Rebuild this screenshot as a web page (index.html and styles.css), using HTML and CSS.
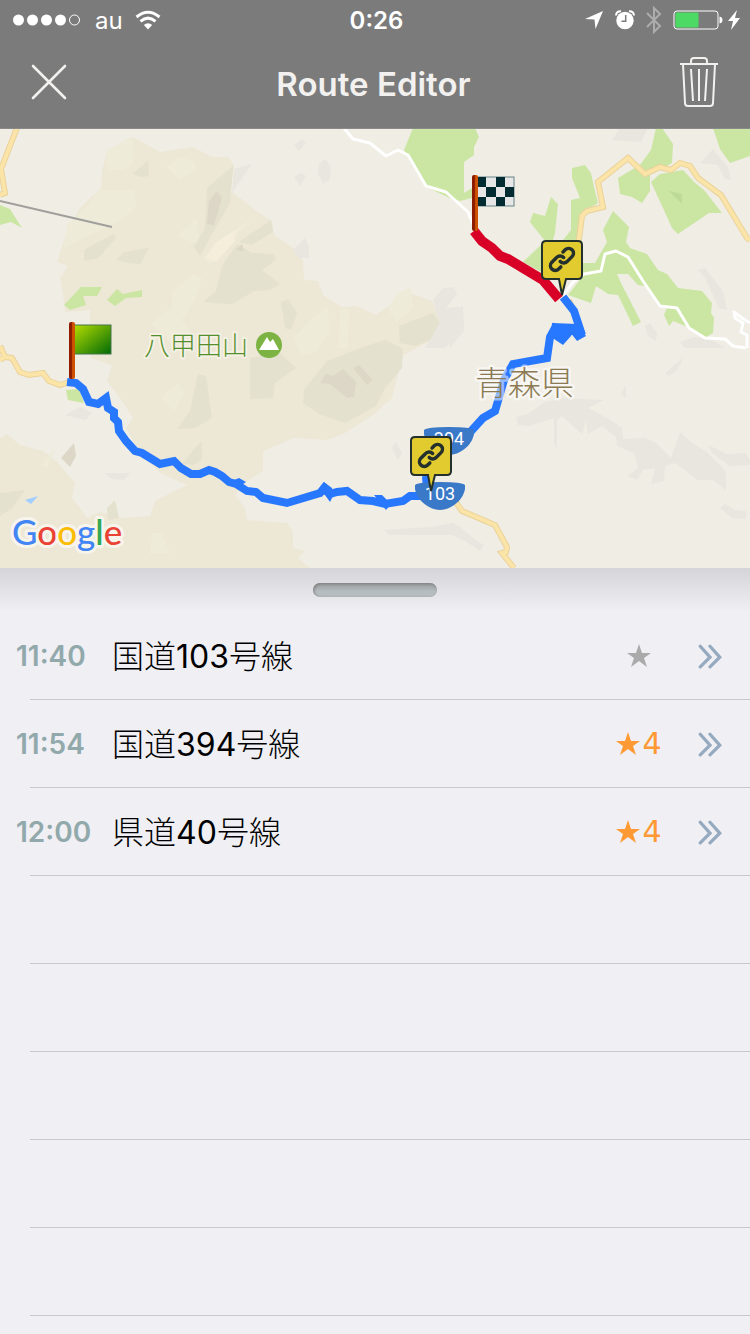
FILE: index.html
```html
<!DOCTYPE html>
<html lang="ja">
<head>
    <meta charset="UTF-8">
    <meta name="viewport" content="width=device-width, initial-scale=1.0">
    <title>Route Editor</title>
    <link rel="stylesheet" href="styles.css">
</head>
<body>
    <header class="header">
        <!-- Status bar -->
        <div class="status-bar">
            <div class="status-left">
                <svg class="signal" width="68" height="12" viewBox="0 0 68 12" fill="#fff">
                    <circle cx="5.500" cy="6" r="5.500"/><circle cx="19.500" cy="6" r="5.500"/><circle cx="33.500" cy="6" r="5.500"/><circle cx="47.500" cy="6" r="5.500"/>
                    <circle cx="61.500" cy="6" r="5" fill="none" stroke="#fff"/>
                </svg>
                <span class="carrier">au</span>
                <svg width="26" height="20" viewBox="0 0 26 20" fill="none" stroke="#fff" stroke-width="3">
                    <path d="M1.500 7Q13-2.500 24.500 7"/>
                    <path d="M5.500 11.300Q13 5 20.500 11.300"/>
                    <path d="M13 19.500L8.800 15Q13 11.500 17.200 15Z" fill="#fff" stroke="none"/>
                </svg>
            </div>
            <span class="clock">0:26</span>
            <div class="status-right">
                <svg width="20" height="20" viewBox="0 0 20 20" fill="#fff"><path d="M1 9L19 1L11.500 19L10.500 9.500Z"/></svg>
                <svg width="20" height="20" viewBox="0 0 20 20">
                    <circle cx="10" cy="10.500" r="8.700" fill="#fff"/>
                    <path d="M1 5.500Q1.500 1 6 1.300M19 5.500Q18.500 1 14 1.300" fill="none" stroke="#fff" stroke-width="2"/>
                    <path d="M10.700 5V11.300H6.500" fill="none" stroke="#7b7b7b" stroke-width="1.500"/>
                </svg>
                <svg width="16" height="28" viewBox="0 0 16 28" fill="none" stroke="#adadad" stroke-width="2"><path d="M1 7L14 20L8 26V2L14 8L1 21"/></svg>
                <svg class="battery" width="50" height="20" viewBox="0 0 50 20">
                    <rect x="1" y="1" width="44" height="18" rx="3" fill="none" stroke="#fff"/>
                    <rect x="2.500" y="2.500" width="23" height="15" rx="1" fill="#4cd964"/>
                    <path d="M46.500 6.500Q49.500 7 49.500 10Q49.500 13 46.500 13.500Z" fill="#fff"/>
                </svg>
                <svg width="12" height="20" viewBox="0 0 12 20" fill="#fff"><path d="M9 0L0 11H5L3 20L12 8H7Z"/></svg>
            </div>
        </div>
        <!-- Navigation bar -->
        <div class="nav-bar">
            <button class="icon-button" type="button" aria-label="Close">
                <svg width="36" height="36" viewBox="0 0 36 36" fill="none" stroke="#f2f1ef" stroke-width="2.600" stroke-linecap="round"><path d="M2 2L34 34M34 2L2 34"/></svg>
            </button>
            <h1>Route Editor</h1>
            <button class="icon-button" type="button" aria-label="Delete route">
                <svg width="38" height="50" viewBox="0 0 38 50" fill="none" stroke="#f2f1ef" stroke-width="2">
                    <path d="M0 7H38M11 7V4Q11 1 14 1H24Q27 1 27 4V7M3 7L5 46Q5 49 8 49H30Q33 49 33 46L35 7M11 12L13 44M19 12V44M27 12L25 44"/>
                </svg>
            </button>
        </div>
    </header>

    <!-- Route map -->
    <svg class="map" viewBox="0 0 750 440" role="img" aria-label="Route map">
        <defs>
            <linearGradient id="start-fill" x1="0" y1="0" x2="1" y2="1">
                <stop offset="0" stop-color="#b5dc00"/><stop offset="1" stop-color="#006a08"/>
            </linearGradient>
            <linearGradient id="pole-fill">
                <stop offset="0.400" stop-color="#8c1c00"/><stop offset="0.600" stop-color="#cf5200"/>
            </linearGradient>
            <g id="link-pin">
                <path d="M-16-54H16Q20-54 20-50V-20Q20-16 16-16H4L0 0L-3-16H-16Q-20-16-20-20V-50Q-20-54-16-54Z" fill="#e2cb2f" stroke="#24302c" stroke-width="2"/>
                <g transform="translate(-13.500 -49) scale(1.120)" fill="none" stroke="#24302c" stroke-width="3.100" stroke-linecap="round">
                    <path d="M10.500 13.800a4.400 4.400 0 0 0 6.500-.300l4-4a4.300 4.300 0 0 0-6.100-6.100l-1.900 1.900"/>
                    <path d="M13.500 10.200a4.400 4.400 0 0 0-6.500.300l-4 4a4.300 4.300 0 0 0 6.100 6.100l1.900-1.900"/>
                </g>
            </g>
            <path id="shield" d="M-25-11Q-22-14 0-14Q22-14 25-11V-7C23 5 10 14 0 14C-10 14-23 5-25-7Z" fill="#3a78c8"/>
        </defs>
        <rect width="750" height="440" fill="#f0ede5"/>

        <!-- high ground -->
        <path fill="#ede7d5" d="M107 23L133 9L160 24L193 19L212 29L228 29L234 37L231 63L258 84L272 93L274 107L293 120L303 133L304 152L318 153L323 167L342 179L356 178L376 187L383 182L410 165L432 173L440 193L432 212L403 227L392 270L373 287L345 305L327 312L293 310L278 317L263 323V343L247 353L235 367L245 380L247 392L287 395L293 403V420L305 423L298 430L310 440H0V310L7 306L20 317L43 323L58 335L75 355L72 370L80 380L87 390L100 384L123 390L150 388L155 373L187 357L160 345L140 325L126 300L133 290L120 270L107 253L112 237L90 230V182L65 184L63 166L60 150L68 138L57 134L67 103L80 80L101 60L102 43Z"/>
        <g fill="#eeebd8">
            <path d="M108 22L131 9L134 18L133 36L125 42L110 42L106 32Z"/>
            <path d="M166 39L180 29L194 33L197 43L187 47L180 52Z"/>
            <path d="M100 62L134 62L137 78L122 92L84 110L63 121L67 97L83 82Z"/>
            <path d="M172 164L193 146L202 150L195 172L182 192L191 203L174 219L151 195L172 179Z"/>
            <path d="M255 89L227 116L210 137L203 130L222 110Z"/>
            <path d="M176 108L197 90L200 117Z"/>
            <path d="M294 209L312 190L328 178L329 205L316 224L300 228Z"/>
            <path d="M340 182L349 180L348 220L339 220Z"/>
            <path d="M388 181L397 166L411 159L413 180L396 195Z"/>
            <path d="M160 270L178 255L185 265L174 283Z"/>
            <path d="M152 405L162 405L170 425L150 426Z"/>
            <path d="M40 338L55 320L47 340Z"/>
        </g>
        <path fill="#f5eedb" d="M206 130L215 115L236 102L234 114L216 134Z"/>
        <g fill="#e4e1ce">
            <path d="M207 60L233 38L230 75L208 113L200 128L194 119L205 100Z"/>
            <path d="M133 46L148 32L149 48L141 49Z"/>
            <path d="M84 122L113 106L116 110L98 130L84 133Z"/>
            <path d="M116 132L124 124L149 120L140 136L130 135Z"/>
            <path d="M239 114L271 92L273 104L252 117Z"/>
            <path d="M222 138L237 116L252 125L274 126L276 132L262 142L280 156L270 162L254 163L232 176L203 174L216 163Z"/>
            <path d="M281 174L288 171L297 185L291 202L285 200Z"/>
            <path d="M399 198L433 185L440 195L430 212L415 218L400 215Z"/>
            <path d="M327 233L363 219L385 212L403 221L402 240L385 260L376 278L345 295L319 286L303 275L304 262Z"/>
            <path d="M250 230L280 225L296 240L275 255L273 270L250 271Z"/>
            <path d="M198 246L206 248L212 290L195 300L177 301L190 283Z"/>
            <path d="M195 320L202 313L202 331L193 337L182 336Z"/>
            <path d="M0 365L25 362L12 380L0 388Z"/>
            <path d="M115 372L119 390L108 392L107 380Z"/>
        </g>
        <g fill="#ddd7c7">
            <path d="M209 73L217 63L222 70L214 97L207 96Z"/>
            <path d="M320 255L326 246L333 248L343 241L356 254L354 269L347 270L330 256Z"/>
            <path d="M353 240L359 237L373 252L367 257Z"/>
            <path d="M236 122L242 116L244 123Z"/>
            <path d="M61 330L74 315L76 328L70 339Z"/>
        </g>
        <g fill="#e9e6df">
            <path d="M232 65L234 41L252 36Z"/>
            <path d="M294 49L302 45L306 48L300 58Z"/>
            <path d="M294 17L302 11L306 15L299 23Z"/>
            <path d="M319 36L325 31L331 39L330 51L323 56L318 46Z"/>
            <path d="M293 122L305 110L309 119L309 130L299 130Z"/>
            <path d="M433 172L443 160L454 159L457 166L446 180L461 179L464 200L445 220H425L440 195Z"/>
            <path d="M392 320L396 314L402 325L398 332Z"/>
            <path d="M384 402L430 399L453 395L460 399L475 412L484 417L480 423L465 413L452 407H390Z"/>
            <path d="M105 345L130 345L124 352L112 351Z"/>
            <path d="M65 287L80 279L92 285L85 292Z"/>
            <path d="M516 289L528 286L545 274L562 270L604 272L588 280L609 291L622 300L623 311L645 310L656 315L671 330L680 304L692 315L707 324L726 344L726 362L713 352L698 352L675 335L665 338L664 353L651 356L655 340L643 342L637 352L628 348L638 340L634 325L617 318L616 309L602 298L588 306L586 292L582 306L562 288L557 292V321L554 315V290L529 298L518 297Z"/>
            <path d="M708 317L727 326L745 325L750 332V337L730 338L712 325Z"/>
            <path d="M720 380L725 376L735 382L746 383V391L732 390Z"/>
            <path d="M665 245L684 229L677 242L669 248Z"/>
            <path d="M612 12L620 0H648L641 14Z"/>
            <path d="M700 35L713 21L728 39L731 52L725 51L718 37Z"/>
            <path d="M698 142L705 140L723 163L727 182L719 180L705 150Z"/>
            <path d="M680 214L695 209L712 212L725 220H685Z"/>
            <path d="M450 182L463 178L464 203L450 220Z"/>
            <path d="M645 198L650 195L657 205L656 213L648 208Z"/>
            <path d="M621 265L626 257V271Z"/>
        </g>

        <!-- forest -->
        <g fill="#cbe6a3">
            <path d="M413 0H475L479 9L474 19L474 27L464 34V65L472 60V70L460 73L450 70L426 59L415 42L404 22Z"/>
            <path d="M0 77L10 81L22 100L11 94L0 97Z"/>
            <path d="M64 177L81 159H102L97 168H83L86 177L70 182Z"/>
            <path d="M107 172L117 161L123 166L142 162V169L126 170L115 178Z"/>
            <path d="M66 262L79 261L84 275L68 272Z"/>
            <path d="M572 40L585 37L591 45L594 59L598 75L583 84L580 92L577 118L543 145L523 134L545 113L530 94L533 85L545 88L551 69L558 76L555 105L553 112H563L571 102V72L580 70L572 50Z"/>
            <path d="M568 167L583 148V135H595L607 114L603 102L613 83L629 99L626 114L630 120L647 126L658 142L667 146L678 160L702 163L712 175L711 185L714 190L713 205L705 210L688 199L673 193L669 198L664 187L667 180L660 178L645 158L638 157L628 146H617L622 157L641 194L633 198L618 167L608 166L596 158L591 175Z"/>
            <path d="M618 50L640 37L651 22L656 0H662L673 16L672 35L660 42L650 47V63L642 75L632 69L620 66Z"/>
            <path d="M651 54L660 46L683 42L694 54L704 62L722 85L709 85L678 106L672 100L663 80Z"/>
            <path d="M713 0H750V28L730 35L720 21Z"/>
        </g>
        <path fill="#bddb96" d="M669 63L682 66V76Z"/>
        <path fill="#a2ceff" d="M25 372L38 368L31 376Z"/>

        <!-- roads -->
        <g fill="none" stroke="#fff" stroke-width="3" stroke-linejoin="round">
            <path d="M344 0L353 11L370 15L386 28L398 22L408 27L426 58L446 64L468 84L475 101"/>
            <path d="M563 168L573 154L584 146L601 143L605 126L616 123L628 129L643 153L660 178L677 180L689 200L705 210L725 211L733 218L746 220"/>
            <path d="M750 195L742 190L734 184L735 190L743 195L741 204L747 207V220"/>
        </g>
        <g fill="none" stroke="#ead29a" stroke-width="6">
            <path d="M17 0L1 41L5 65L0 67"/>
            <path d="M0 218L5 229L12 230L20 244L29 247L43 245L49 253L60 257L70 254M0 232L6 228"/>
            <path d="M578 118L582 88L587 83L603 79L598 54L628 30L645 46L660 39L671 42L680 35L690 38L698 50L721 67L747 110L750 112M569 172L576 190"/>
            <path d="M455 373L462 383L495 397L507 419L506 424L502 425L514 440"/>
        </g>
        <g fill="none" stroke="#fbe4a8" stroke-width="4">
            <path d="M17 0L1 41L5 65L0 67"/>
            <path d="M0 218L5 229L12 230L20 244L29 247L43 245L49 253L60 257L70 254M0 232L6 228"/>
            <path d="M578 118L582 88L587 83L603 79L598 54L628 30L645 46L660 39L671 42L680 35L690 38L698 50L721 67L747 110L750 112"/>
            <path d="M455 373L462 383L495 397L507 419L506 424L502 425L514 440"/>
        </g>
        <path d="M0 73L112 99" stroke="#a09f9c" stroke-width="2"/>

        <!-- route -->
        <g fill="none" stroke="#2878ff" stroke-width="8">
            <path d="M67 254L76 255L83 261L89 274L98 276L106 270L108 280L114 284L114 290L118 294L119 303L126 313L135 323L142 325L160 336L174 333L181 340L191 346H200L209 342L215 344L222 348L229 354L236 356L247 363L256 364L263 370L287 375L320 365L324 360L330 366L337 364L347 363L360 372L373 373L385 376L403 373L410 368H420L427 362L426 348"/>
            <path d="M463 312L483 290L495 283L504 252L513 236L547 230L550 209L555 200L566 206L577 199L582 207L578 195L574 183L563 169"/>
        </g>
        <path fill="#2878ff" d="M317 364L324 354L332 360L334 366L330 374L325 367ZM232 353L239 350L246 354L240 358ZM552 195L578 196L586 208L577 213L570 204L571 208L563 217L551 209ZM374 367L382 367L391 376L386 382Z"/>
        <path d="M474 103L482 113L492 120L500 128L508 131L543 152L559 171" fill="none" stroke="#d90027" stroke-width="10"/>

        <!-- place names -->
        <text class="label-peak" x="144" y="227">八甲田山</text>
        <circle cx="269" cy="217" r="13" fill="#7cb342"/>
        <path d="M259 222L267 209L270 214L273 211L279 222Z" fill="#fff"/>
        <text class="label-area" x="475" y="267">青森県</text>

        <!-- route numbers -->
        <use href="#shield" x="449" y="313"/>
        <text class="label-road" x="449" y="317">394</text>
        <use href="#shield" x="440" y="368"/>
        <text class="label-road" x="440" y="372">103</text>
        <use href="#link-pin" x="431" y="363"/>
        <use href="#link-pin" x="562" y="167"/>

        <!-- start flag -->
        <rect x="74" y="197" width="37" height="29" fill="url(#start-fill)" stroke="#45774a"/>
        <rect x="69" y="194" width="6" height="57" rx="2" fill="url(#pole-fill)"/>

        <!-- finish flag -->
        <rect x="477" y="49" width="37" height="29" fill="#e6e6e6" stroke="#668587"/>
        <path fill="#032c32" d="M477 49H486V59H477ZM496 49H505V59H496ZM486 59H496V69H486ZM505 59H514V69H505ZM477 69H486V78H477ZM496 69H505V78H496Z"/>
        <rect x="472" y="47" width="6" height="56" rx="2" fill="url(#pole-fill)"/>

        <text class="map-logo" x="12" y="417"><tspan fill="#4285f4">G</tspan><tspan fill="#ea4335">o</tspan><tspan fill="#fbbc05">o</tspan><tspan fill="#4285f4">g</tspan><tspan fill="#34a853">l</tspan><tspan fill="#ea4335">e</tspan></text>
        <path d="M0 0H750" stroke="#8a8a8a" stroke-width="2"/>
    </svg>

    <!-- Route sections -->
    <main class="sections">
        <div class="drag-area"><button class="drag-handle" type="button" aria-label="Resize map"></button></div>
        <ul class="section-list">
            <li>
                <span class="time">11:40</span>
                <span class="name">国道<span class="number">103</span>号線</span>
                <span class="rating unrated"><svg class="star" viewBox="0 0 24 23"><path d="M12 0L15 9H24L17 14L20 23L12 17L4 23L7 14L0 9H9Z"/></svg></span>
                <button class="more" type="button" aria-label="国道103号線"><svg class="chevrons" viewBox="0 0 24 24"><path d="M3 3L12 13L3 22M12 3L21 13L12 22"/></svg></button>
            </li>
            <li>
                <span class="time">11:54</span>
                <span class="name">国道<span class="number">394</span>号線</span>
                <span class="rating"><svg class="star" viewBox="0 0 24 23"><path d="M12 0L15 9H24L17 14L20 23L12 17L4 23L7 14L0 9H9Z"/></svg>4</span>
                <button class="more" type="button" aria-label="国道394号線"><svg class="chevrons" viewBox="0 0 24 24"><path d="M3 3L12 13L3 22M12 3L21 13L12 22"/></svg></button>
            </li>
            <li>
                <span class="time">12:00</span>
                <span class="name">県道<span class="number">40</span>号線</span>
                <span class="rating"><svg class="star" viewBox="0 0 24 23"><path d="M12 0L15 9H24L17 14L20 23L12 17L4 23L7 14L0 9H9Z"/></svg>4</span>
                <button class="more" type="button" aria-label="県道40号線"><svg class="chevrons" viewBox="0 0 24 24"><path d="M3 3L12 13L3 22M12 3L21 13L12 22"/></svg></button>
            </li>
            <li></li>
            <li></li>
            <li></li>
            <li></li>
            <li></li>
        </ul>
    </main>
</body>
</html>
```

FILE: styles.css
```css
* {
    box-sizing: border-box;
}

body {
    margin: 0;
    font-family: Inter, "Noto Sans CJK JP", sans-serif;
    background-color: #efeff4;
    color: #000;
}

svg {
    display: block;
}

button {
    padding: 0;
    border: none;
    background: none;
    cursor: pointer;
}

.header {
    background-color: #7b7b7b;
    color: #fff;
}

.status-bar {
    display: grid;
    grid-template-columns: 1fr auto 1fr;
    align-items: center;
    height: 40px;
    padding: 0 10px 0 13px;
    font-size: 24px;
}

.status-left, .status-right {
    display: flex;
    align-items: center;
}

.status-left {
    gap: 12px;
}

.signal {
    margin-right: 2px;
}

.status-right {
    justify-content: flex-end;
    gap: 11px;
}

.battery {
    margin-right: -6px;
}

.clock {
    font-weight: 600;
}

.nav-bar {
    display: flex;
    align-items: center;
    justify-content: space-between;
    height: 88px;
    padding: 0 32px 0 31px;
}

.nav-bar h1 {
    margin: 0;
    font-size: 33px;
    font-weight: 600;
    color: #f2f1ef;
}

.icon-button {
    padding-bottom: 4px;
}

.map {
    width: 100%;
    height: auto;
}

.map text {
    paint-order: stroke;
    stroke-linejoin: round;
}

.label-peak {
    font-size: 26px;
    font-weight: 300;
    fill: #558f2b;
    stroke: #f4f1e4;
    stroke-width: 4px;
}

.label-area {
    font-size: 33px;
    font-weight: 300;
    fill: #8b7a52;
    stroke: rgba(255, 255, 255, 0.5);
    stroke-width: 5px;
}

.label-road {
    font-family: Roboto, sans-serif;
    font-size: 18px;
    fill: #fff;
    text-anchor: middle;
}

.map-logo {
    font-family: Lato, sans-serif;
    font-size: 35px;
    font-weight: 500;
    stroke: #f7f4ec;
    stroke-width: 6px;
}

.drag-area {
    height: 44px;
    padding-top: 15px;
    background: linear-gradient(#d5d4d9, #efeff4);
}

.drag-handle {
    display: block;
    width: 124px;
    height: 14px;
    margin: 0 auto;
    border-radius: 7px;
    background: linear-gradient(#989b9d, #b6bdc0 60%);
    box-shadow: inset 1px 1px 3px #808080;
}

.section-list {
    margin: 0;
    padding: 0;
    list-style: none;
}

.section-list li {
    display: flex;
    align-items: center;
    height: 88px;
    margin-left: 30px;
    padding-right: 27px;
    border-bottom: 1px solid #c8c7cc;
}

.time {
    width: 96px;
    margin-left: -14px;
    font-size: 28px;
    font-weight: 600;
    color: #92a9ab;
}

.name {
    flex: 1;
    padding-bottom: 4px;
    font-size: 32px;
    font-weight: 300;
}

.number {
    font-weight: 400;
}

.rating {
    display: flex;
    align-items: center;
    justify-content: center;
    gap: 2px;
    width: 60px;
    font-family: "DejaVu Sans", sans-serif;
    font-size: 30px;
    color: #ff9933;
}

.unrated {
    color: #aaa;
}

.star {
    width: 24px;
    height: 23px;
    fill: currentColor;
}

.more {
    margin-left: 28px;
}

.chevrons {
    width: 26px;
    height: 26px;
    fill: none;
    stroke: #95a9bf;
    stroke-width: 3px;
    stroke-linecap: round;
}
```
